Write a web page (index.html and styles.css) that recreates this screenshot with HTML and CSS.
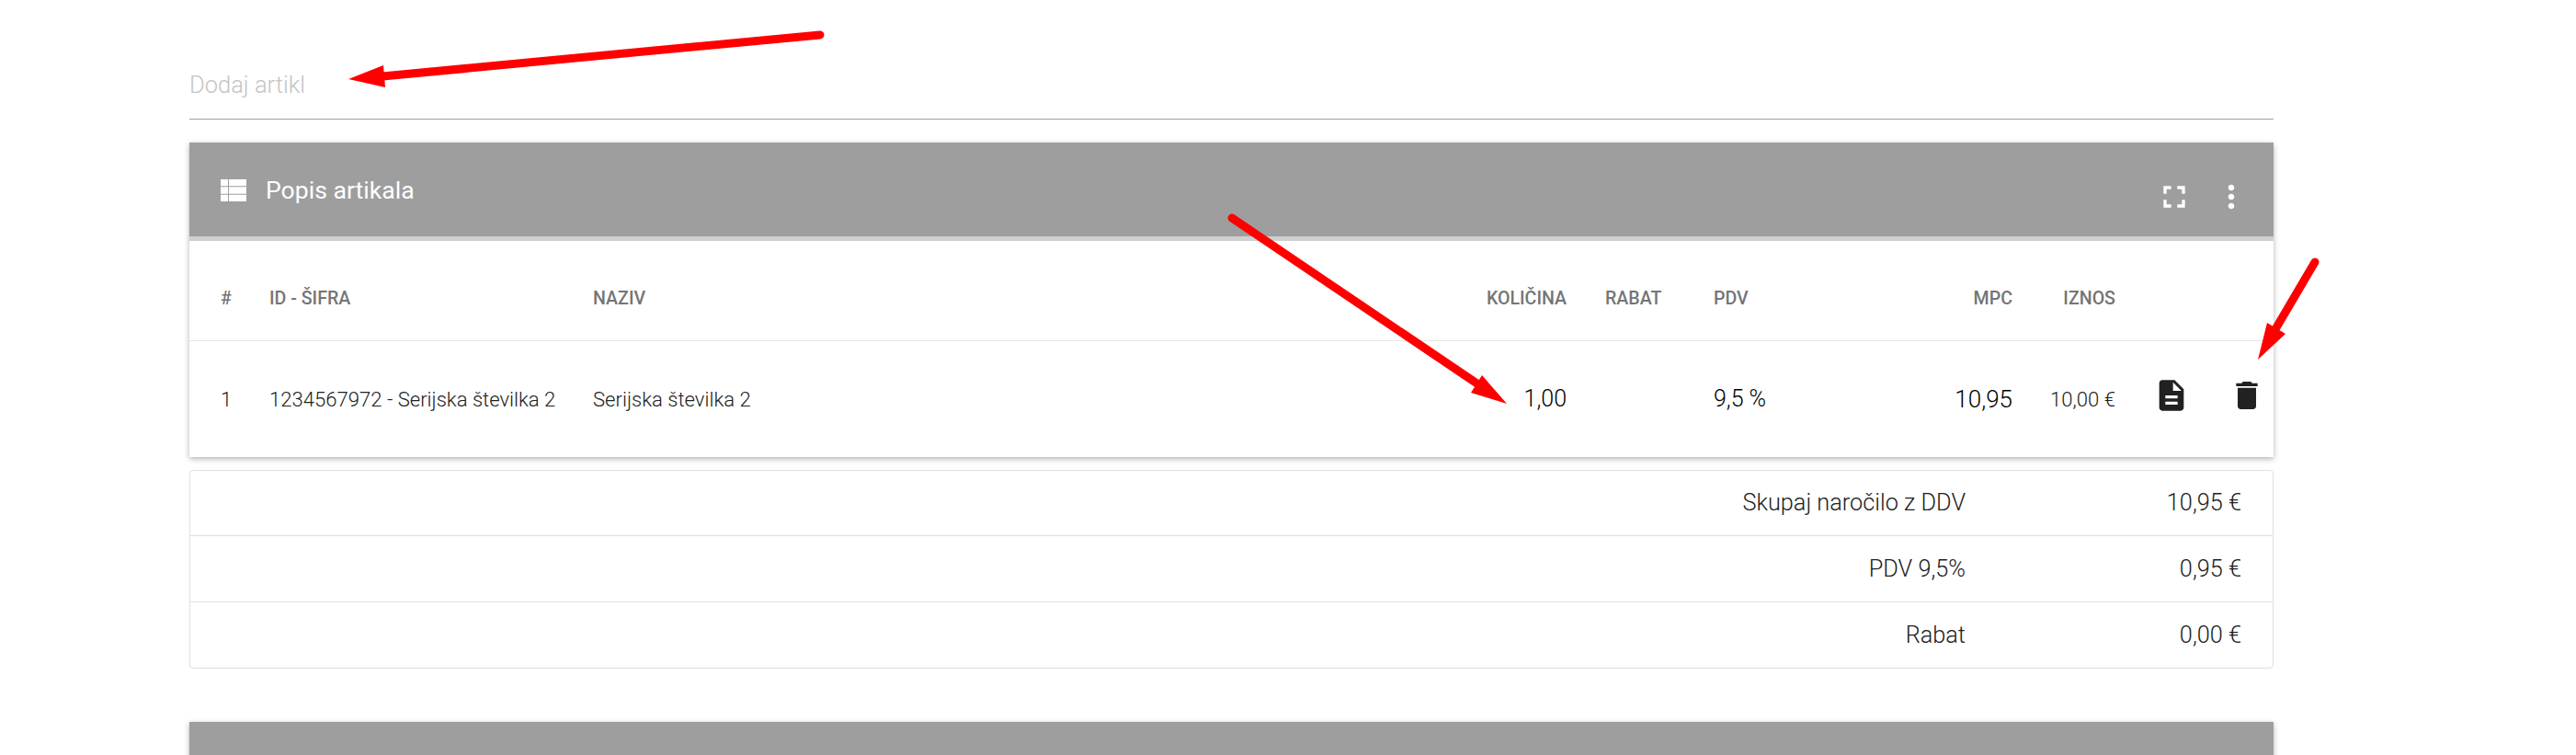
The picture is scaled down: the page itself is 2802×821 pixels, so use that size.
FILE: index.html
```html
<!DOCTYPE html>
<html lang="en">
  <head>
    <meta charset="UTF-8" />
    <meta name="viewport" content="width=device-width, initial-scale=1.0" />
    <title>Popis artikala</title>
    <link rel="stylesheet" href="styles.css">
  </head>
  <body>
    <main class="page">
      <input type="text" class="add-item" placeholder="Dodaj artikl" />

      <section class="card">
        <header class="card-header">
          <div class="card-title">
            <svg class="title-icon" viewBox="0 0 28 24">
              <path d="M0 0h8v7.300H0zM9 0h19v7.300H9zM0 8.350h8v7.300H0zM9 8.350h19v7.300H9zM0 16.700h8V24H0zM9 16.700h19V24H9z" />
            </svg>
            <span>Popis artikala</span>
          </div>
          <div class="card-actions">
            <svg class="icon" viewBox="0 0 24 24">
              <path d="M7 14H5v5h5v-2H7v-3zm-2-4h2V7h3V5H5v5zm12 7h-3v2h5v-5h-2v3zM14 5v2h3v3h2V5h-5z" />
            </svg>
            <svg class="icon" viewBox="0 0 24 24">
              <path d="M12 8c1.100 0 2-.9 2-2s-.9-2-2-2-2 .9-2 2 .9 2 2 2zm0 2c-1.100 0-2 .9-2 2s.9 2 2 2 2-.9 2-2-.9-2-2-2zm0 6c-1.100 0-2 .9-2 2s.9 2 2 2 2-.9 2-2-.9-2-2-2z" />
            </svg>
          </div>
        </header>

        <table class="items">
          <colgroup>
            <col class="col-num" />
            <col class="col-id" />
            <col class="col-name" />
            <col class="col-qty" />
            <col class="col-discount" />
            <col class="col-vat" />
            <col class="col-price" />
            <col class="col-total" />
            <col class="col-doc" />
            <col class="col-del" />
          </colgroup>
          <thead>
            <tr>
              <th class="cell-num">#</th>
              <th>ID - ŠIFRA</th>
              <th>NAZIV</th>
              <th class="right">KOLIČINA</th>
              <th class="cell-discount">RABAT</th>
              <th>PDV</th>
              <th class="right">MPC</th>
              <th class="right">IZNOS</th>
              <th></th>
              <th></th>
            </tr>
          </thead>
          <tbody>
            <tr>
              <td class="cell-num">1</td>
              <td>1234567972 - Serijska številka 2</td>
              <td>Serijska številka 2</td>
              <td class="right strong">1,00</td>
              <td class="cell-discount"></td>
              <td class="strong">9,5 %</td>
              <td class="right price">10,95</td>
              <td class="right">10,00 €</td>
              <td class="cell-doc">
                <svg class="icon dark" viewBox="0 0 24 24">
                  <path d="M14 2H6c-1.100 0-1.990.9-1.990 2L4 20c0 1.100.89 2 1.990 2H18c1.100 0 2-.9 2-2V8l-6-6zm2 16H8v-2h8v2zm0-4H8v-2h8v2zm-3-5V3.500L18.500 9H13z" />
                </svg>
              </td>
              <td class="cell-del">
                <svg class="icon dark" viewBox="0 0 24 24">
                  <path d="M6 19c0 1.100.9 2 2 2h8c1.100 0 2-.9 2-2V7H6v12zM19 4h-3.500l-1-1h-5l-1 1H5v2h14V4z" />
                </svg>
              </td>
            </tr>
          </tbody>
        </table>
      </section>

      <table class="summary">
        <tbody>
          <tr>
            <td class="summary-label">Skupaj naročilo z DDV</td>
            <td class="summary-value">10,95 €</td>
          </tr>
          <tr>
            <td class="summary-label">PDV 9,5%</td>
            <td class="summary-value">0,95 €</td>
          </tr>
          <tr>
            <td class="summary-label">Rabat</td>
            <td class="summary-value">0,00 €</td>
          </tr>
        </tbody>
      </table>

      <section class="card">
        <header class="card-header"></header>
      </section>
    </main>

    <!-- red arrows drawn on top of the screenshot -->
    <svg class="arrows" viewBox="0 0 2802 821">
      <line x1="892" y1="38" x2="416" y2="83" />
      <polygon points="379,86 417,71 419,95" />
      <line x1="1340" y1="237" x2="1608" y2="418" />
      <polygon points="1639,439 1612,408 1600,427" />
      <line x1="2518" y1="285" x2="2475" y2="358" />
      <polygon points="2456,391 2466,351 2486,363" />
    </svg>
  </body>
</html>
```

FILE: styles.css
```css
html,
body {
  margin: 0;
  background-color: white;
}

body {
  font-family: Roboto, "Liberation Sans", sans-serif;
  font-weight: 300;
  color: #212121;
}

.page {
  height: 821px;
  box-sizing: border-box;
  padding: 60px 329px 0 206px;
  overflow: hidden;
}

.add-item {
  display: block;
  width: 100%;
  height: 70px;
  box-sizing: border-box;
  margin-bottom: 25px;
  padding: 0 0 6px;
  border: none;
  border-bottom: 1px solid #9e9e9e;
  outline: none;
  font-family: inherit;
  font-weight: 300;
  font-size: 25.5px;
}

.add-item::placeholder {
  color: #c4c4c4;
  opacity: 1;
}

.card {
  background-color: white;
  box-shadow: 0 2px 6px rgba(0, 0, 0, 0.3);
}

.card-header {
  display: flex;
  align-items: center;
  justify-content: space-between;
  height: 102px;
  padding: 0 26px 0 34px;
  border-bottom: 5px solid #d0d0d0;
  background-color: #9e9e9e;
  color: white;
}

.card-title {
  display: flex;
  align-items: center;
  gap: 21px;
  padding-top: 1px;
  font-size: 26.6px;
  font-weight: 400;
}

.title-icon {
  width: 28px;
  height: 24px;
  fill: white;
}

.card-actions {
  display: flex;
  gap: 22px;
  margin-top: 16px;
}

.icon {
  display: block;
  width: 40px;
  height: 40px;
  fill: white;
}

.icon.dark {
  fill: #212121;
  margin-bottom: 8px;
}

.items {
  width: 100%;
  border-collapse: collapse;
  table-layout: fixed;
}

.col-num { width: 87px; }
.col-id { width: 352px; }
.col-name { width: 959px; }
.col-qty { width: 100px; }
.col-discount { width: 160px; }
.col-vat { width: 156px; }
.col-price { width: 169px; }
.col-total { width: 112px; }
.col-doc { width: 99px; }
.col-del { width: 73px; }

.items th,
.items td {
  padding: 0;
  text-align: left;
  white-space: nowrap;
}

.items th {
  box-sizing: border-box;
  height: 108px;
  padding-top: 18px;
  border-bottom: 1px solid #e5e5e5;
  font-size: 19.6px;
  font-weight: 500;
  color: #757575;
}

.items td {
  height: 126px;
  font-size: 22.1px;
}

.items .right {
  text-align: right;
}

.items .cell-num {
  padding-left: 34px;
}

.items .cell-discount {
  padding-left: 42px;
}

.items .cell-doc {
  padding-left: 41px;
}

.items .cell-del {
  padding-left: 24px;
}

.items .strong {
  font-size: 25px;
  color: black;
}

.items .price {
  font-size: 26px;
  color: black;
}

.summary {
  width: 100%;
  margin: 14px 0 58px;
  border: 1px solid #e0e0e0;
  border-spacing: 0;
  border-radius: 4px;
  table-layout: fixed;
}

.summary td {
  height: 70px;
  padding: 0;
  font-size: 25.3px;
  text-align: right;
}

.summary tr + tr td {
  height: 71px;
  border-top: 1px solid #e0e0e0;
}

.summary .summary-value {
  width: 334px;
  padding-right: 34px;
  box-sizing: border-box;
}

.arrows {
  position: absolute;
  top: 0;
  left: 0;
  width: 2802px;
  height: 821px;
}

.arrows line {
  stroke: #ff0000;
  stroke-width: 9;
  stroke-linecap: round;
}

.arrows polygon {
  fill: #ff0000;
}
```
